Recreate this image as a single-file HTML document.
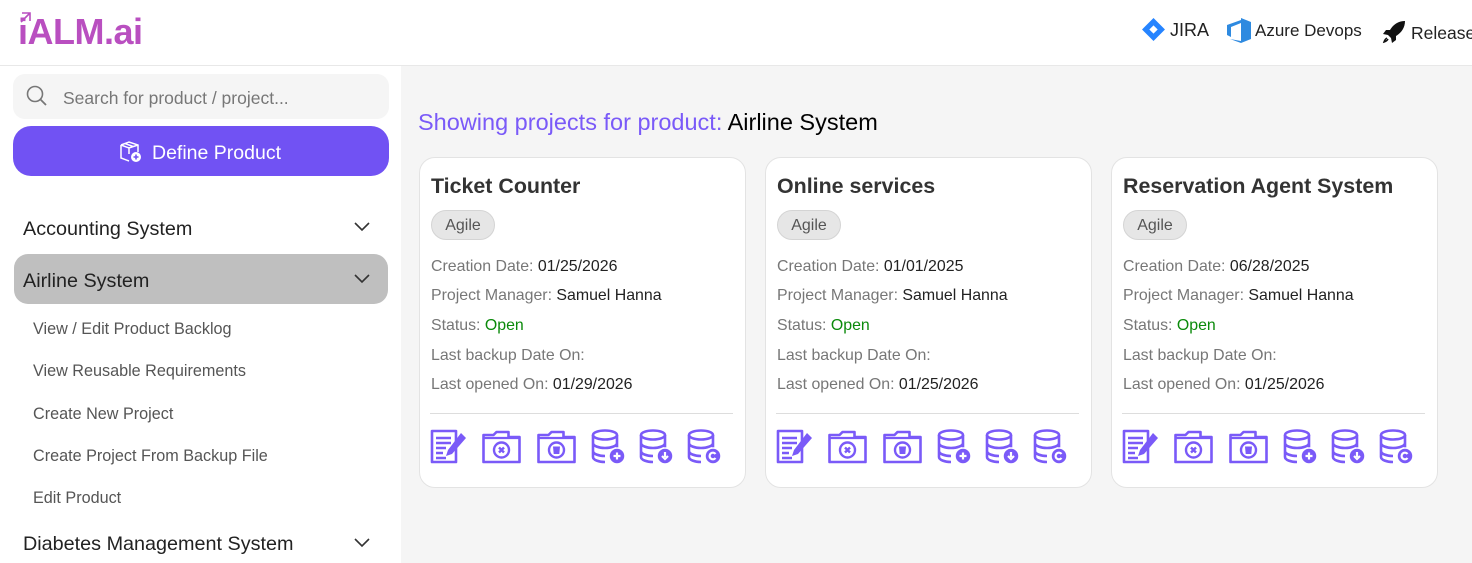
<!DOCTYPE html>
<html><head><meta charset="utf-8">
<style>
*{margin:0;padding:0;box-sizing:border-box}
body{width:1472px;height:563px;overflow:hidden;font-family:"Liberation Sans",sans-serif;background:#f5f5f5;position:relative;color:#222}
.hdr{position:absolute;left:0;top:0;width:1472px;height:66px;background:#fff;border-bottom:1px solid #e8e8e8}
.side{position:absolute;left:0;top:66px;width:401px;height:497px;background:#fff}
.abs{position:absolute;white-space:nowrap}
.card{position:absolute;top:157px;width:327px;height:331px;background:#fff;border:1px solid #e3e3e3;border-radius:16px}
.card .t{position:absolute;left:11px;top:16px;font-size:21.4px;color:#333;font-weight:bold}
.card .b{position:absolute;left:11px;top:52px;width:64px;height:30px;border:1px solid #d4d4d4;background:#e6e6e6;border-radius:15px;font-size:16px;color:#555;text-align:center;line-height:29px}
.card .l{position:absolute;left:11px;font-size:15.9px;color:#777}
.card .l b{font-weight:normal;color:#222}
.card .l i{font-style:normal;color:#0a8a0a}
.card .hr{position:absolute;left:10px;right:12px;top:255px;border-top:1px solid #ddd}
.card svg.ic{position:absolute;top:271px}
.sub{position:absolute;left:33px;font-size:16.2px;color:#555}
.prod{position:absolute;left:23px;font-size:19.8px;color:#222}
.chev{position:absolute;left:354px}
</style></head><body>
<div class="hdr"></div>
<div class="abs" style="left:18px;top:11px;font-size:36px;font-weight:bold;color:#b94fc0;letter-spacing:-0.5px">iALM.ai</div>
<svg class="abs" style="left:19px;top:11px" width="14" height="12" viewBox="0 0 14 12"><path d="M3 2h8v8M11 2L2 11" stroke="#b94fc0" stroke-width="1.6" fill="none"/></svg>

<svg class="abs" style="left:1141px;top:17px" width="25" height="25" viewBox="0 0 24 24"><path d="M12 1L23 12 12 23 1 12Z" fill="#2684ff"/><path d="M12 8L16 12 12 16 8 12Z" fill="#fff"/></svg>
<div class="abs" style="left:1170px;top:20px;font-size:18px;color:#222">JIRA</div>
<svg class="abs" style="left:1225px;top:18px" width="28" height="26" viewBox="0 0 28 26"><path d="M2 7L16 2V0L26 4V21L16 25 5 21 16 23V5L6 9V19L2 17Z" fill="#2e8ae0"/></svg>
<div class="abs" style="left:1255px;top:21px;font-size:17px;color:#222">Azure Devops</div>
<svg class="abs" style="left:1381px;top:19px" width="26" height="26" viewBox="0 0 26 26"><path d="M24 2C17 2 12 6 9 11L5 11 2 15 7 16 10 19 11 24 15 21 15 17C20 14 24 9 24 2Z" fill="#111"/><path d="M6 19C4 20 3 23 3 23S6 22 7 20" stroke="#111" stroke-width="1.5" fill="none"/></svg>
<div class="abs" style="left:1411px;top:23px;font-size:17.5px;color:#222">Releases</div>

<div class="side"></div>
<div class="abs" style="left:13px;top:74px;width:376px;height:45px;background:#f5f5f5;border-radius:12px"></div>
<svg class="abs" style="left:26px;top:85px" width="22" height="22" viewBox="0 0 22 22"><circle cx="9" cy="9" r="7.5" stroke="#777" stroke-width="1.6" fill="none"/><path d="M14.5 14.5L20 20" stroke="#777" stroke-width="1.8"/></svg>
<div class="abs" style="left:63px;top:88px;font-size:17.5px;color:#777">Search for product / project...</div>
<div class="abs" style="left:13px;top:126px;width:376px;height:50px;background:#7152f3;border-radius:18px"></div>
<svg class="abs" style="left:119px;top:140px" width="24" height="24" viewBox="0 0 24 24"><path d="M2 5L10 2 19 5V12M2 5V18L10 21M2 5L10 8 19 5M10 8V14M6 3.5L14 6.5" stroke="#fff" stroke-width="1.5" fill="none"/><circle cx="17" cy="17" r="5" fill="#fff"/><path d="M17 14.5v5M14.5 17h5" stroke="#7152f3" stroke-width="1.6"/></svg>
<div class="abs" style="left:152px;top:142px;font-size:19.5px;color:#fff">Define Product</div>

<div class="prod" style="top:218px">Accounting System</div>
<svg class="chev" style="top:222px" width="16" height="10" viewBox="0 0 16 10"><path d="M1 1L8 8 15 1" stroke="#333" stroke-width="1.6" fill="none"/></svg>
<div class="abs" style="left:14px;top:254px;width:374px;height:50px;background:#bfbfbf;border-radius:14px"></div>
<div class="prod" style="top:270px">Airline System</div>
<svg class="chev" style="top:274px" width="16" height="10" viewBox="0 0 16 10"><path d="M1 1L8 8 15 1" stroke="#333" stroke-width="1.6" fill="none"/></svg>
<div class="sub" style="top:320px">View / Edit Product Backlog</div>
<div class="sub" style="top:362px">View Reusable Requirements</div>
<div class="sub" style="top:405px">Create New Project</div>
<div class="sub" style="top:447px">Create Project From Backup File</div>
<div class="sub" style="top:489px">Edit Product</div>
<div class="prod" style="top:533px">Diabetes Management System</div>
<svg class="chev" style="top:538px" width="16" height="10" viewBox="0 0 16 10"><path d="M1 1L8 8 15 1" stroke="#333" stroke-width="1.6" fill="none"/></svg>

<div class="abs" style="left:418px;top:109px;font-size:23.5px;color:#7a5af8">Showing projects for product: <span style="color:#000">Airline System</span></div>

<svg width="0" height="0" style="position:absolute">
<defs>
<g id="ed"><path d="M2 2H26V33H2Z" fill="none" stroke="#7a5af8" stroke-width="2.6" stroke-linejoin="round"/><path d="M6 9H21M6 14H21M6 19H16M6 24H13M6 29H16" stroke="#7a5af8" stroke-width="2.6"/><path d="M31 4L36 9 22 25 16 27 18 21Z" fill="#7a5af8"/></g>
<g id="fx"><path d="M2 6H12L15 3H27V8H38V33H2Z" fill="none" stroke="#7a5af8" stroke-width="2.6" stroke-linejoin="round"/><path d="M2 9H38" stroke="#7a5af8" stroke-width="2.2"/><circle cx="20" cy="21" r="7.5" fill="none" stroke="#7a5af8" stroke-width="2.4"/><path d="M17.5 18.5l5 5M22.5 18.5l-5 5" stroke="#7a5af8" stroke-width="2.4"/></g>
<g id="ft"><path d="M2 6H12L15 3H27V8H38V33H2Z" fill="none" stroke="#7a5af8" stroke-width="2.6" stroke-linejoin="round"/><path d="M2 9H38" stroke="#7a5af8" stroke-width="2.2"/><circle cx="20" cy="21" r="7.5" fill="none" stroke="#7a5af8" stroke-width="2.4"/><path d="M16.5 17.5H23.5L22.8 25H17.2Z" fill="#7a5af8"/></g>
<g id="db"><ellipse cx="14" cy="6" rx="12" ry="4.5" fill="none" stroke="#7a5af8" stroke-width="2.6"/><path d="M2 6V28C2 31 8 33 14 33M26 6V20M2 14C2 17 8 19 14 19S26 17 26 14M2 22C2 25 8 27 14 27" fill="none" stroke="#7a5af8" stroke-width="2.6"/><circle cx="26" cy="27" r="8" fill="#7a5af8" stroke="#fff" stroke-width="1.5"/></g>
</defs></svg>

<div class="card" style="left:419px">
<div class="t">Ticket Counter</div><div class="b">Agile</div>
<div class="l" style="top:100px">Creation Date: <b>01/25/2026</b></div>
<div class="l" style="top:129px">Project Manager: <b>Samuel Hanna</b></div>
<div class="l" style="top:159px">Status: <i>Open</i></div>
<div class="l" style="top:189px">Last backup Date On:</div>
<div class="l" style="top:218px">Last opened On: <b>01/29/2026</b></div>
<div class="hr"></div>
<svg class="ic" style="left:10px" width="38" height="36" viewBox="0 0 38 36"><use href="#ed"/></svg>
<svg class="ic" style="left:61px" width="41" height="36" viewBox="0 0 40 36"><use href="#fx"/></svg>
<svg class="ic" style="left:116px" width="41" height="36" viewBox="0 0 40 36"><use href="#ft"/></svg>
<svg class="ic" style="left:171px" width="36" height="36" viewBox="0 0 36 36"><use href="#db"/><path d="M26 23.5v7M22.5 27h7" stroke="#fff" stroke-width="2.2"/></svg>
<svg class="ic" style="left:219px" width="36" height="36" viewBox="0 0 36 36"><use href="#db"/><path d="M26 23v5M23 27l3 3 3-3" stroke="#fff" stroke-width="2.2" fill="none"/></svg>
<svg class="ic" style="left:267px" width="36" height="36" viewBox="0 0 36 36"><use href="#db"/><path d="M28.5 25A3.3 3.3 0 1 0 28.5 29" stroke="#fff" stroke-width="2.2" fill="none"/></svg>
</div>

<div class="card" style="left:765px">
<div class="t">Online services</div><div class="b">Agile</div>
<div class="l" style="top:100px">Creation Date: <b>01/01/2025</b></div>
<div class="l" style="top:129px">Project Manager: <b>Samuel Hanna</b></div>
<div class="l" style="top:159px">Status: <i>Open</i></div>
<div class="l" style="top:189px">Last backup Date On:</div>
<div class="l" style="top:218px">Last opened On: <b>01/25/2026</b></div>
<div class="hr"></div>
<svg class="ic" style="left:10px" width="38" height="36" viewBox="0 0 38 36"><use href="#ed"/></svg>
<svg class="ic" style="left:61px" width="41" height="36" viewBox="0 0 40 36"><use href="#fx"/></svg>
<svg class="ic" style="left:116px" width="41" height="36" viewBox="0 0 40 36"><use href="#ft"/></svg>
<svg class="ic" style="left:171px" width="36" height="36" viewBox="0 0 36 36"><use href="#db"/><path d="M26 23.5v7M22.5 27h7" stroke="#fff" stroke-width="2.2"/></svg>
<svg class="ic" style="left:219px" width="36" height="36" viewBox="0 0 36 36"><use href="#db"/><path d="M26 23v5M23 27l3 3 3-3" stroke="#fff" stroke-width="2.2" fill="none"/></svg>
<svg class="ic" style="left:267px" width="36" height="36" viewBox="0 0 36 36"><use href="#db"/><path d="M28.5 25A3.3 3.3 0 1 0 28.5 29" stroke="#fff" stroke-width="2.2" fill="none"/></svg>
</div>

<div class="card" style="left:1111px">
<div class="t">Reservation Agent System</div><div class="b">Agile</div>
<div class="l" style="top:100px">Creation Date: <b>06/28/2025</b></div>
<div class="l" style="top:129px">Project Manager: <b>Samuel Hanna</b></div>
<div class="l" style="top:159px">Status: <i>Open</i></div>
<div class="l" style="top:189px">Last backup Date On:</div>
<div class="l" style="top:218px">Last opened On: <b>01/25/2026</b></div>
<div class="hr"></div>
<svg class="ic" style="left:10px" width="38" height="36" viewBox="0 0 38 36"><use href="#ed"/></svg>
<svg class="ic" style="left:61px" width="41" height="36" viewBox="0 0 40 36"><use href="#fx"/></svg>
<svg class="ic" style="left:116px" width="41" height="36" viewBox="0 0 40 36"><use href="#ft"/></svg>
<svg class="ic" style="left:171px" width="36" height="36" viewBox="0 0 36 36"><use href="#db"/><path d="M26 23.5v7M22.5 27h7" stroke="#fff" stroke-width="2.2"/></svg>
<svg class="ic" style="left:219px" width="36" height="36" viewBox="0 0 36 36"><use href="#db"/><path d="M26 23v5M23 27l3 3 3-3" stroke="#fff" stroke-width="2.2" fill="none"/></svg>
<svg class="ic" style="left:267px" width="36" height="36" viewBox="0 0 36 36"><use href="#db"/><path d="M28.5 25A3.3 3.3 0 1 0 28.5 29" stroke="#fff" stroke-width="2.2" fill="none"/></svg>
</div>
</body></html>
